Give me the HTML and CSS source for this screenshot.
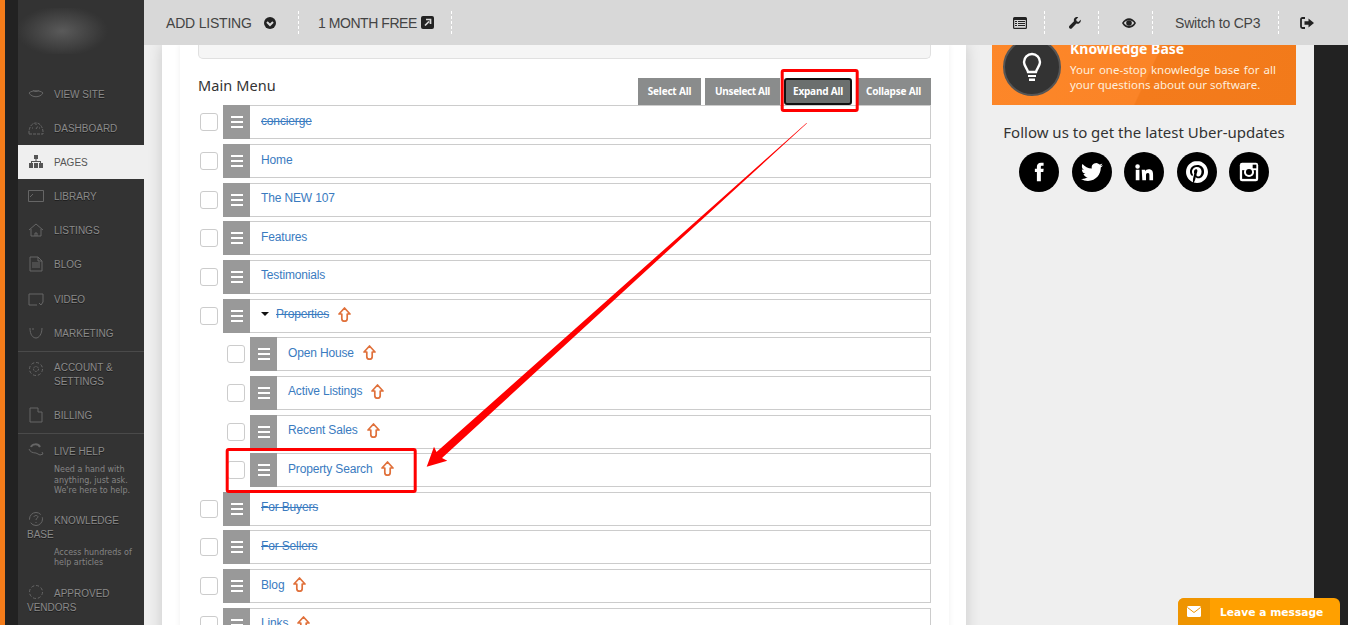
FILE: index.html
```html
<!DOCTYPE html>
<html lang="en">
<head>
<meta charset="utf-8">
<title>Pages</title>
<link rel="stylesheet" href="styles.css">
</head>
<body>
<svg class="sprite" width="0" height="0">
  <symbol id="up" viewBox="0 0 13 15"><path d="M6.5 1 L12 7 H9.2 V11.5 a2.7 2.7 0 0 1 -5.4 0 V7 H1 Z" fill="none" stroke="#e0703a" stroke-width="1.7" stroke-linejoin="round"/></symbol>
</svg>
<div class="strip-orange"></div>
<div class="strip-dark"></div>
<nav class="sidebar">
  <div class="logo"></div>
  <div class="nav-group first">
    <a class="nav-item"><svg class="ni" viewBox="0 0 16 16"><path d="M1 7c3-3 11-3 14 0-3 5-11 5-14 0zM5 4c1 2 5 2 6 0" fill="none"/></svg>VIEW SITE</a>
    <a class="nav-item"><svg class="ni" viewBox="0 0 16 16"><path d="M1 14h14v-3C14 5 11 3 8 3S2 5 1 11zM8 9l2-3M4 8h1M11 8h1M8 4v1" fill="none" stroke-dasharray="3 1"/></svg>DASHBOARD</a>
    <a class="nav-item active"><svg class="ni solid" viewBox="0 0 16 16"><path d="M6 1h4v4H6zM7.500 5h1v2h-1zM3 7h10v2h-1V8H4v1H3zM1 9h4v5H1zM6 9h4v5H6zM11 9h4v5h-4z"/></svg>PAGES</a>
    <a class="nav-item"><svg class="ni" viewBox="0 0 16 16"><path d="M.5 2.500h15v11H.5zM2 9l3-3" fill="none"/></svg>LIBRARY</a>
    <a class="nav-item"><svg class="ni" viewBox="0 0 16 16"><path d="M1 8l7-6 7 6M3 7v7h10V7M7 14v-3h2v3" fill="none"/></svg>LISTINGS</a>
    <a class="nav-item"><svg class="ni" viewBox="0 0 16 16"><path d="M2 1h8l4 4v10H2zM10 1v4h4M4 7h8M4 9h8M4 11h8" fill="none"/></svg>BLOG</a>
    <a class="nav-item nudge"><svg class="ni" viewBox="0 0 16 16"><path d="M9 14H1V3h14v8l-2 3-2-2" fill="none"/></svg>VIDEO</a>
    <a class="nav-item"><svg class="ni" viewBox="0 0 16 16"><path d="M2 3c0 7 3 10 6 10s6-4 6-10M5 3v2" fill="none"/></svg>MARKETING</a>
  </div>
  <div class="nav-group">
    <a class="nav-item account"><svg class="ni" viewBox="0 0 16 16"><circle cx="8" cy="8" r="6.500" fill="none" stroke-dasharray="3 2"/><circle cx="8" cy="8" r="2.500" fill="none" stroke-dasharray="2 1"/></svg><span>ACCOUNT &amp;<br>SETTINGS</span></a>
    <a class="nav-item"><svg class="ni tall" viewBox="0 0 16 16"><path d="M2 15V1h8v4h4v10z" fill="none"/></svg>BILLING</a>
  </div>
  <div class="nav-group help">
    <a class="nav-block"><svg class="ni" viewBox="0 0 16 16"><path d="M1 7c1 3 4 4 7 4l4 2 3-1-1-2" fill="none"/><path d="M3 5c1-3 7-4 9 0" fill="none" stroke-width="2"/></svg>LIVE HELP</a>
    <p class="nav-desc">Need a hand with<br>anything, just ask.<br>We're here to help.</p>
    <a class="nav-block spaced"><svg class="ni" viewBox="0 0 16 16"><circle cx="8" cy="8" r="6.500" fill="none" stroke-dasharray="16 3"/><path d="M6 6c0-2 4-2 4 0 0 1-2 1-2 3M8 11v1" fill="none"/></svg>KNOWLEDGE BASE</a>
    <p class="nav-desc">Access hundreds of<br>help articles</p>
    <a class="nav-block spaced-more"><svg class="ni" viewBox="0 0 16 16"><circle cx="8" cy="8" r="6.500" fill="none" stroke-dasharray="3 2"/></svg>APPROVED VENDORS</a>
  </div>
</nav>
<div class="right-area">
  <header class="topbar">
    <div class="tb tb-add">ADD LISTING
      <svg class="tb-chev" viewBox="0 0 12 12"><circle cx="6" cy="6" r="6" fill="#222"/><path d="M3 5l3 3 3-3" fill="none" stroke="#d8d8d8" stroke-width="2"/></svg>
    </div>
    <div class="tb tb-free sep">1 MONTH FREE
      <svg class="tb-ext" viewBox="0 0 13 13"><rect width="13" height="13" rx="2" fill="#222"/><path d="M4 9.500l4-4M5 3.500h4.500V8" fill="none" stroke="#d8d8d8" stroke-width="1.700"/></svg>
    </div>
    <div class="tb sep tb-end"></div>
    <div class="tb-right">
      <div class="tb tb-ic"><svg class="ic" viewBox="0 0 14 12"><path d="M0 1.500A1.500 1.500 0 0 1 1.500 0h11A1.500 1.500 0 0 1 14 1.500v9a1.500 1.500 0 0 1-1.500 1.500h-11A1.500 1.500 0 0 1 0 10.500z" fill="#222"/><path d="M1.200 3h11.600v7.800H1.200z" fill="#d8d8d8"/><path d="M2 4h2v1H2zM5 4h7v1H5zM2 6h2v1H2zM5 6h7v1H5zM2 8h2v1H2zM5 8h7v1H5z" fill="#222"/></svg></div>
      <div class="tb tb-ic sep"><svg class="ic" viewBox="0 0 14 14"><path d="M13.600 3.200L11 5.700 9 5 8.300 3 10.800.4C9 -.3 6.800.3 6 2c-.5 1-.4 2-.2 2.900L.6 10.200c-.8.8-.8 2 0 2.800.8.800 2 .8 2.800 0l5.300-5.300c1 .3 2 .3 3-.2 1.700-.9 2.500-2.800 1.900-4.500z" fill="#222"/></svg></div>
      <div class="tb tb-ic sep"><svg class="ic" viewBox="0 0 14 10"><path d="M0 5c3.500-6.500 10.500-6.500 14 0-3.500 6.500-10.500 6.500-14 0z" fill="#222"/><path d="M1.800 5C4.500 1.200 9.500 1.200 12.200 5 9.500 8.800 4.500 8.800 1.800 5z" fill="#d8d8d8"/><circle cx="7" cy="5" r="2.800" fill="#222"/></svg></div>
      <div class="tb tb-switch sep">Switch to CP3</div>
      <div class="tb tb-ic tb-out sep"><svg class="ic" viewBox="0 0 14 12"><path d="M5 1H2.500C1.500 1 1 1.600 1 2.500v7c0 .9.500 1.500 1.500 1.500H5" fill="none" stroke="#222" stroke-width="1.800"/><path d="M4.500 4.200h4V1.500L14 6l-5.500 4.500V7.800h-4z" fill="#222"/></svg></div>
    </div>
  </header>
  <div class="content">
    <main class="col-main">
      <section class="panel">
        <div class="top-well"></div>
        <div class="menu-head">
          <h2 class="menu-title">Main Menu</h2>
          <div class="btns">
            <button class="btn btn-select">Select All</button>
            <button class="btn btn-unselect">Unselect All</button>
            <button class="btn btn-expand">Expand All</button>
            <button class="btn btn-collapse">Collapse All</button>
          </div>
        </div>
        <ul class="rows">
          <li class="row"><span class="chk"></span><div class="bar"><span class="grip"><i></i><i></i><i></i></span><a class="lbl off">concierge</a></div></li>
          <li class="row"><span class="chk"></span><div class="bar"><span class="grip"><i></i><i></i><i></i></span><a class="lbl">Home</a></div></li>
          <li class="row"><span class="chk"></span><div class="bar"><span class="grip"><i></i><i></i><i></i></span><a class="lbl">The NEW 107</a></div></li>
          <li class="row"><span class="chk"></span><div class="bar"><span class="grip"><i></i><i></i><i></i></span><a class="lbl">Features</a></div></li>
          <li class="row"><span class="chk"></span><div class="bar"><span class="grip"><i></i><i></i><i></i></span><a class="lbl">Testimonials</a></div></li>
          <li class="row"><span class="chk"></span><div class="bar"><span class="grip"><i></i><i></i><i></i></span><span class="caret"></span><a class="lbl off after-caret">Properties</a><svg class="up"><use href="#up"/></svg></div></li>
          <li class="row sub"><span class="chk"></span><div class="bar"><span class="grip"><i></i><i></i><i></i></span><a class="lbl">Open House</a><svg class="up"><use href="#up"/></svg></div></li>
          <li class="row sub"><span class="chk"></span><div class="bar"><span class="grip"><i></i><i></i><i></i></span><a class="lbl">Active Listings</a><svg class="up"><use href="#up"/></svg></div></li>
          <li class="row sub"><span class="chk"></span><div class="bar"><span class="grip"><i></i><i></i><i></i></span><a class="lbl">Recent Sales</a><svg class="up"><use href="#up"/></svg></div></li>
          <li class="row sub"><span class="chk"></span><div class="bar"><span class="grip"><i></i><i></i><i></i></span><a class="lbl">Property Search</a><svg class="up"><use href="#up"/></svg></div></li>
          <li class="row"><span class="chk"></span><div class="bar"><span class="grip"><i></i><i></i><i></i></span><a class="lbl off">For Buyers</a></div></li>
          <li class="row"><span class="chk"></span><div class="bar"><span class="grip"><i></i><i></i><i></i></span><a class="lbl off">For Sellers</a></div></li>
          <li class="row"><span class="chk"></span><div class="bar"><span class="grip"><i></i><i></i><i></i></span><a class="lbl">Blog</a><svg class="up"><use href="#up"/></svg></div></li>
          <li class="row"><span class="chk"></span><div class="bar"><span class="grip"><i></i><i></i><i></i></span><a class="lbl">Links</a><svg class="up"><use href="#up"/></svg></div></li>
        </ul>
      </section>
    </main>
    <aside class="col-side">
      <div class="kb-banner">
        <div class="kb-circle"><svg class="kb-bulb" viewBox="0 0 20 30"><path d="M10 2a8 8 0 0 0-8 8c0 4 3 6 4 10h8c1-4 4-6 4-10a8 8 0 0 0-8-8z" fill="none" stroke="#fff" stroke-width="2.400"/><path d="M6 23h8v2H6zM7 26.500h6V29H7z" fill="#fff"/></svg></div>
        <div class="kb-text">
          <h3 class="kb-title">Knowledge Base</h3>
          <p class="kb-desc">Your one-stop knowledge base for all your questions about our software.</p>
        </div>
      </div>
      <p class="follow">Follow us to get the latest Uber-updates</p>
      <div class="socials">
        <span class="soc"><svg viewBox="0 0 24 24"><path d="M14 8.500V6.600c0-.9.200-1.400 1.500-1.400H17V2h-2.700C11 2 9.700 4 9.700 6.300v2.200H7.500V12h2.200v10H14V12h2.700l.4-3.500z" fill="#fff"/></svg></span>
        <span class="soc"><svg viewBox="0 0 24 24"><path d="M23.950 4.570a10 10 0 0 1-2.820.77 4.960 4.960 0 0 0 2.160-2.720c-.95.55-2 .95-3.120 1.180a4.920 4.920 0 0 0-8.380 4.480C7.690 8.090 4.070 6.130 1.640 3.160a4.820 4.820 0 0 0-.66 2.470c0 1.710.87 3.210 2.190 4.100a4.900 4.900 0 0 1-2.230-.61v.06c0 2.390 1.700 4.380 3.950 4.830a5 5 0 0 1-2.210.08 4.940 4.940 0 0 0 4.600 3.420A9.870 9.870 0 0 1 0 19.540a14 14 0 0 0 7.560 2.210c9.050 0 14-7.500 14-13.980 0-.21 0-.42-.02-.63a9.940 9.940 0 0 0 2.460-2.550z" fill="#fff"/></svg></span>
        <span class="soc"><svg viewBox="0 0 24 24"><path d="M4.980 3.500a2.500 2.500 0 1 1 0 5 2.500 2.500 0 0 1 0-5zM3 9.500h4V21H3zM9.500 9.500h3.800v1.600h.05c.53-1 1.830-2.050 3.770-2.050 4.030 0 4.780 2.650 4.780 6.100V21h-4v-5.200c0-1.240-.02-2.840-1.730-2.840-1.730 0-2 1.350-2 2.750V21h-4z" fill="#fff"/></svg></span>
        <span class="soc"><svg viewBox="0 0 24 24"><path d="M12.017 0C5.396 0 .029 5.367.029 11.987c0 5.079 3.158 9.417 7.618 11.162-.105-.949-.199-2.403.041-3.439.219-.937 1.406-5.957 1.406-5.957s-.359-.72-.359-1.781c0-1.663.967-2.911 2.168-2.911 1.024 0 1.518.769 1.518 1.688 0 1.029-.653 2.567-.992 3.992-.285 1.193.6 2.165 1.775 2.165 2.128 0 3.768-2.245 3.768-5.487 0-2.861-2.063-4.869-5.008-4.869-3.410 0-5.409 2.562-5.409 5.199 0 1.033.394 2.143.889 2.741.099.120.112.225.085.345-.09.375-.293 1.199-.334 1.363-.053.225-.172.271-.401.165-1.495-.69-2.433-2.878-2.433-4.646 0-3.776 2.748-7.252 7.920-7.252 4.158 0 7.392 2.967 7.392 6.923 0 4.135-2.607 7.462-6.233 7.462-1.214 0-2.354-.629-2.758-1.379l-.749 2.848c-.269 1.045-1.004 2.352-1.498 3.146 1.123.345 2.306.535 3.550.535 6.607 0 11.985-5.365 11.985-11.987C23.970 5.390 18.592.026 11.985.026L12.017 0z" fill="#fff"/></svg></span>
        <span class="soc"><svg viewBox="0 0 24 24"><rect x="2" y="2" width="20" height="20" rx="2.500" fill="#fff"/><rect x="4.500" y="10" width="15" height="9.500" fill="#000"/><rect x="16" y="4" width="4" height="4" fill="#000"/><circle cx="12" cy="12" r="5.500" fill="#fff"/><circle cx="12" cy="12" r="3.300" fill="#000"/></svg></span>
      </div>
    </aside>
    <div class="strip-right"></div>
  </div>
</div>

<svg class="annot" viewBox="0 0 1348 625" width="1348" height="625">
  <rect class="annot-box" x="782.2" y="70.500" width="75" height="40" rx="1.500"/>
  <rect class="annot-box" x="227.200" y="449.500" width="188" height="42" rx="1.500"/>
  <polygon class="annot-arrow" points="807,123.200 442,458 447.300,460.700 426.700,466.700 434,446.700 436.500,452 806.500,123"/>
</svg>

<div class="chat">
  <span class="chat-ic"><svg viewBox="0 0 14 11" width="14" height="11"><rect width="14" height="11" rx="1.500" fill="#fff"/><path d="M.5 1.500L7 6.500l6.500-5" fill="none" stroke="#ee9400" stroke-width="1"/></svg></span>
  <span class="chat-txt">Leave a message</span>
</div>
</body>
</html>
```
FILE: styles.css
```css
* { box-sizing: border-box; }
html, body { margin: 0; padding: 0; width: 1348px; height: 625px; overflow: hidden; }
body { display: flex; position: relative; font-family: "Liberation Sans", Arial, sans-serif; background: #efefef; }
.sprite { position: absolute; }
.strip-orange { width: 5px; flex: none; background: #f57c1a; }
.strip-dark { width: 13px; flex: none; background: #222; }

/* Sidebar */
.sidebar { width: 126px; flex: none; background: #333; color: #8a8a8a; font-size: 10px; }
.logo { height: 46px; margin-top: 8px; width: 92px; background: radial-gradient(ellipse 50% 55% at 48% 50%, #5a5a5a, #444 55%, #363636 90%, #333); }
.nav-group { border-bottom: 1px solid #4a4a4a; }
.nav-group.first { margin-top: 23px; margin-bottom: 1px; }
.nav-group.help { border-bottom: 0; padding-top: 8px; }
.nav-item { display: flex; align-items: center; height: 34px; padding-left: 10px; text-shadow: 0 1px 0 #1c1c1c; }
.nav-item.nudge { margin-top: 1px; }
.nav-item.active { background: #efefef; color: #555; text-shadow: none; }
.nav-item.account { height: 45px; padding-top: 8px; padding-bottom: 9px; line-height: 14px; }
.nav-item.account .ni { align-self: flex-start; }
.nav-group .nav-item:last-child { margin-bottom: 1px; }
.ni { width: 16px; height: 16px; flex: none; margin-right: 10px; stroke: #666; stroke-width: 1; fill: none; }
.ni.solid { fill: #555; stroke: none; }
.ni.tall { height: 18px; }
.nav-block { display: block; padding-left: 9px; line-height: 14px; text-shadow: 0 1px 0 #1c1c1c; }
.nav-block .ni { display: inline-block; vertical-align: -3px; margin-left: 1px; }
.nav-block.spaced { margin-top: 14px; }
.nav-block.spaced-more { margin-top: 15px; }
.nav-desc { margin: 6px 0 0; padding-left: 36px; font: 8px/10.500px "DejaVu Sans", Verdana, sans-serif; color: #858585; }

/* Top bar */
.right-area { width: 1204px; flex: none; display: flex; flex-direction: column; height: 625px; }
.topbar { position: relative; z-index: 2; flex: none; height: 45px; background: #d8d8d8; display: flex; align-items: center; color: #444; font-size: 14px; letter-spacing: -.2px; }
.tb { display: flex; align-items: center; height: 23px; flex: none; }
.sep { border-left: 1px dashed #fff; }
.tb-add { width: 154px; padding-left: 22px; }
.tb-chev { width: 12px; height: 12px; margin-left: 12px; }
.tb-free { width: 153px; padding-left: 19px; letter-spacing: -.45px; }
.tb-ext { width: 13px; height: 13px; margin-left: 4px; }
.tb-end { width: 1px; }
.tb-right { margin-left: auto; display: flex; }
.tb-ic { width: 54px; padding-left: 23px; }
.ic { width: 14px; height: 12px; }
.tb-switch { width: 126px; padding-left: 22px; }
.tb-out { width: 70px; padding-left: 21px; }

/* Content */
.content { flex: 1; display: flex; min-height: 0; background: #efefef; }
.col-main { width: 804px; flex: none; margin-left: 18px; padding: 0 17px 0 18px; background: #fff; box-shadow: 0 0 14px rgba(0,0,0,.16); height: 700px; }
.panel { width: 769px; background: #fff; padding: 0 18px; box-shadow: 0 0 6px rgba(0,0,0,.07); height: 700px; }
.top-well { height: 14px; background: #f5f5f5; border: 1px solid #e0e0e0; border-top: 0; border-radius: 0 0 5px 5px; }
.menu-head { height: 46.4px; display: flex; align-items: flex-end; justify-content: space-between; }
.menu-title { margin: 0 0 10px; font: 400 14.5px/20px "Noto Sans", sans-serif; color: #333; letter-spacing: .1px; }
.btns { display: flex; gap: 4px; }
.btn { height: 27px; padding: 0; border: 0; background: #8a8c8c; color: #fff; text-align: center; font: 700 10px/27px "Noto Sans", sans-serif; letter-spacing: -.2px; white-space: nowrap; }
.btn-select { width: 63px; }
.btn-unselect { width: 75px; letter-spacing: -.35px; }
.btn-expand { width: 68px; background: #6b6f6e; border: 2px solid #111; border-radius: 3px; line-height: 23px; }
.btn-collapse { width: 75px; }
.rows { list-style: none; margin: 0; padding: 0; display: flex; flex-direction: column; gap: 4.65px; }
.row { display: flex; align-items: center; height: 34px; padding-left: 2px; flex: none; }
.row.sub { padding-left: 29px; }
.chk { width: 18px; height: 18px; flex: none; margin-right: 5px; background: #fff; border: 1px solid #ccc; border-radius: 3px; }
.bar { flex: 1; height: 34px; display: flex; align-items: center; border: 1px solid #ccc; border-left: 0; background: #fff; }
.grip { width: 27px; height: 34px; margin-top: -1px; margin-bottom: -1px; background: #999; flex: none; display: flex; flex-direction: column; align-items: center; justify-content: center; gap: 3px; }
.grip i { display: block; width: 12px; height: 2px; background: #fff; }
.lbl { margin-left: 11px; margin-bottom: 3px; font-size: 12px; letter-spacing: -.15px; color: #3a7bbf; }
.lbl.off { text-decoration: line-through; }
.lbl.after-caret { margin-left: 7px; }
.caret { margin-left: 11px; margin-bottom: 3px; width: 0; height: 0; border: 4px solid transparent; border-top: 4px solid #111; border-bottom: 0; }
.up { width: 13px; height: 15px; margin-left: 9px; margin-bottom: 3px; flex: none; }

/* Side column */
.col-side { width: 304px; flex: none; margin-left: 26px; margin-right: 18px; }
.kb-banner { height: 75px; margin-top: -15px; padding: 8px 20px 0 11px; display: flex; background: linear-gradient(115deg, #fd8729 0%, #fb8427 52%, #f47b1c 52.500%, #f27a1a 100%); }
.kb-circle { width: 58px; height: 58px; flex: none; border-radius: 50%; background: #333; border: 2px solid #555; display: flex; align-items: center; justify-content: center; }
.kb-bulb { width: 20px; height: 30px; }
.kb-text { margin-left: 9px; width: 206px; color: #fff; font-family: "Noto Sans", sans-serif; }
.kb-title { margin: 1px 0 3px; font-size: 14px; line-height: 20px; font-weight: 700; }
.kb-desc { margin: 0; font-size: 11.500px; line-height: 15px; text-align: justify; color: #feeedd; }
.follow { margin: 17px 0 0; text-align: center; font: 400 15px/20px "Noto Sans", sans-serif; color: #333; white-space: nowrap; }
.socials { display: flex; justify-content: center; gap: 12.500px; margin-top: 10px; }
.soc { width: 40px; height: 40px; border-radius: 50%; background: #000; display: flex; align-items: center; justify-content: center; }
.soc svg { width: 22px; height: 22px; }
.strip-right { width: 34px; flex: none; background: #222; height: 700px; position: relative; z-index: 1; }

/* Annotations */
.annot { position: absolute; left: 0; top: 0; z-index: 3; pointer-events: none; }
.annot-box { fill: none; stroke: #f00; stroke-width: 3; }
.annot-arrow { fill: #f00; }

/* Chat widget */
.chat { position: absolute; left: 1178px; top: 598px; z-index: 4; width: 162px; height: 27px; display: flex; align-items: center; background: #ffa000; border-radius: 6px 6px 0 0; overflow: hidden; }
.chat-ic { width: 32px; height: 27px; background: #ee9400; display: flex; align-items: center; justify-content: center; }
.chat-txt { margin-left: 10px; padding-top: 1px; color: #fff; font: 700 10.7px "DejaVu Sans", Verdana, sans-serif; white-space: nowrap; }
```
